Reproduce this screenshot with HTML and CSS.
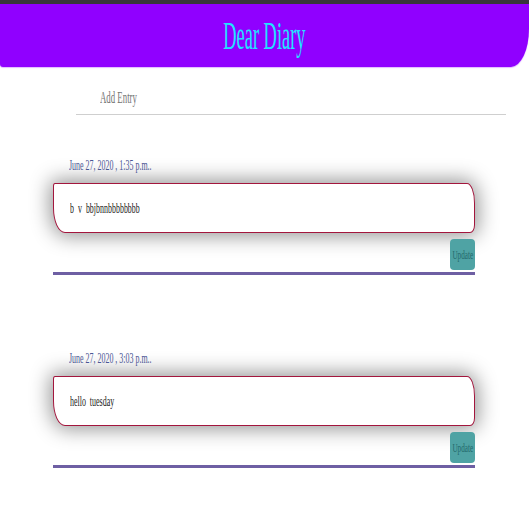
FILE: index.html
```html
<!DOCTYPE html>
<html>
<head>
<meta charset="utf-8">
<link rel="stylesheet" href="styles.css">
</head>
<body>
<div class="topbar"></div>
<header class="header"><h1 class="title"><span class="sq sq-title">Dear Diary</span></h1></header>
<div class="add"><span class="sq sq-add">Add Entry</span></div>
<main class="entries">
  <section class="entry">
    <div class="date"><span class="sq">June 27, 2020 , 1:35 p.m..</span></div>
    <div class="card"><span class="sq">b &nbsp;v &nbsp;bbjbnnbbbbbbbb</span></div>
    <div class="actions"><button class="btn"><span class="sq sq-btn">Update</span></button></div>
    <div class="rule"></div>
  </section>
  <section class="entry">
    <div class="date"><span class="sq">June 27, 2020 , 3:03 p.m..</span></div>
    <div class="card"><span class="sq">hello &nbsp;tuesday</span></div>
    <div class="actions"><button class="btn"><span class="sq sq-btn">Update</span></button></div>
    <div class="rule"></div>
  </section>
</main>
</body>
</html>
```
FILE: styles.css
```css
html, body {
  margin: 0;
  padding: 0;
  background: #fff;
  font-family: "Liberation Serif", "Times New Roman", serif;
}
.sq {
  display: inline-block;
  white-space: nowrap;
  transform: scaleX(0.53);
  transform-origin: left center;
}
.topbar {
  height: 4px;
  background: #38363a;
}
.header {
  height: 63px;
  background: #9000ff;
  border-bottom-right-radius: 18px 38px;
  border-bottom-left-radius: 3px;
  box-shadow: 0 1px 1px rgba(170, 60, 255, 0.35);
}
.title {
  margin: 0;
  font-size: 40px;
  font-weight: normal;
  line-height: 63px;
  text-align: center;
  color: #1fe4ff;
}
.sq-title {
  transform: scaleX(0.46);
  transform-origin: center center;
}
.add {
  margin: 13px 23px 0 76px;
  padding: 8px 24px 6px;
  height: 20px;
  line-height: 20px;
  font-size: 16px;
  color: #757575;
  border-bottom: 1px solid #cfcfcf;
}
.sq-add {
  transform: scaleX(0.55);
}
.entries {
  width: 422px;
  margin: 41px 0 0 53px;
}
.entry {
  margin-bottom: 74px;
}
.entry:last-child {
  margin-bottom: 0;
}
.date {
  padding-left: 16px;
  font-size: 15px;
  line-height: 18px;
  color: #4a5694;
  margin-bottom: 9px;
}
.card {
  border: 1px solid #a3163d;
  border-radius: 2px 8px 5px 12px / 3px 20px 8px 25px;
  background: #fff;
  padding: 15px 16px;
  font-size: 15px;
  line-height: 18px;
  color: #1a1a1a;
  box-shadow: 0 0 20px 3px rgba(0, 0, 0, 0.42);
}
.actions {
  display: flex;
  justify-content: flex-end;
  margin-top: 6px;
}
.btn {
  width: 25px;
  height: 31px;
  padding: 0;
  border: none;
  border-radius: 4px;
  background: #4fa3a4;
  color: #23696b;
  font-family: "Liberation Serif", "Times New Roman", serif;
  font-size: 13px;
  display: flex;
  align-items: center;
  justify-content: center;
  overflow: visible;
}
.sq-btn {
  transform: scaleX(0.55);
  transform-origin: center center;
}
.rule {
  margin-top: 2px;
  height: 3px;
  background: #6e5fa3;
}
```
